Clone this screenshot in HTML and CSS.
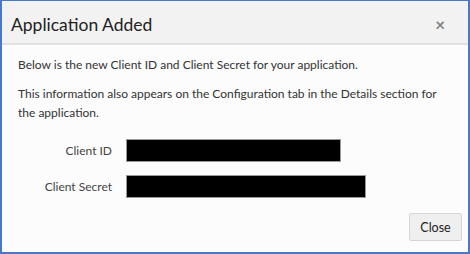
FILE: index.html
```html
<!DOCTYPE html>
<html lang="en">
<head>
    <meta charset="UTF-8">
    <title>Application Added</title>
    <link rel="stylesheet" href="styles.css">
</head>
<body>
    <div class="dialog">
        <div class="dialog-header">
            <h1 class="dialog-title">Application Added</h1>
            <span class="dialog-close">&times;</span>
        </div>
        <div class="dialog-body">
            <p>Below is the new Client ID and Client Secret for your application.</p>
            <p>This information also appears on the Configuration tab in the Details section for the application.</p>
            <div class="fields">
                <div class="field">
                    <label>Client ID</label>
                    <div class="redacted redacted-id"></div>
                </div>
                <div class="field">
                    <label>Client Secret</label>
                    <div class="redacted redacted-secret"></div>
                </div>
            </div>
        </div>
        <div class="dialog-footer">
            <button class="btn">Close</button>
        </div>
    </div>
</body>
</html>
```

FILE: styles.css
```css
body {
    margin: 0;
    font-family: Lato, 'Open Sans', Arial, sans-serif;
    color: #333;
}
.dialog {
    width: 466px;
    height: 251px;
    border: 2px solid #4a78c8;
    border-top-width: 1px;
    background: #fcfcfc;
    display: flex;
    flex-direction: column;
}
.dialog-header {
    box-sizing: border-box;
    height: 44px;
    padding: 5px 23px 0 9px;
    background: #f2f2f2;
    border-bottom: 2px solid #e1e1e1;
    display: flex;
    align-items: center;
    justify-content: space-between;
}
.dialog-title {
    margin: 0;
    font-size: 17.5px;
    font-weight: normal;
    color: #222;
}
.dialog-close {
    font-size: 17px;
    color: #808080;
    font-weight: bold;
}
.dialog-body {
    padding: 10px 16px 0;
    font-size: 12px;
    line-height: 19px;
    flex: 1;
}
.dialog-body p {
    margin: 0 0 10px;
}
.fields {
    margin-top: 17px;
    display: flex;
    flex-direction: column;
    gap: 13px;
}
.field {
    display: flex;
    align-items: center;
    gap: 14px;
}
.field label {
    width: 94px;
    text-align: right;
    color: #444;
}
.redacted {
    height: 21px;
    background: #000;
    border: 1px solid #999;
}
.redacted-id {
    width: 213px;
}
.redacted-secret {
    width: 238px;
}
.dialog-footer {
    display: flex;
    justify-content: flex-end;
    padding: 0 6px 11px 0;
}
.btn {
    width: 53px;
    height: 28px;
    font-family: inherit;
    font-size: 12.5px;
    color: #222;
    background: #efefef;
    border: 1px solid #d6d6d6;
    border-radius: 2px;
    padding: 0;
}
```
